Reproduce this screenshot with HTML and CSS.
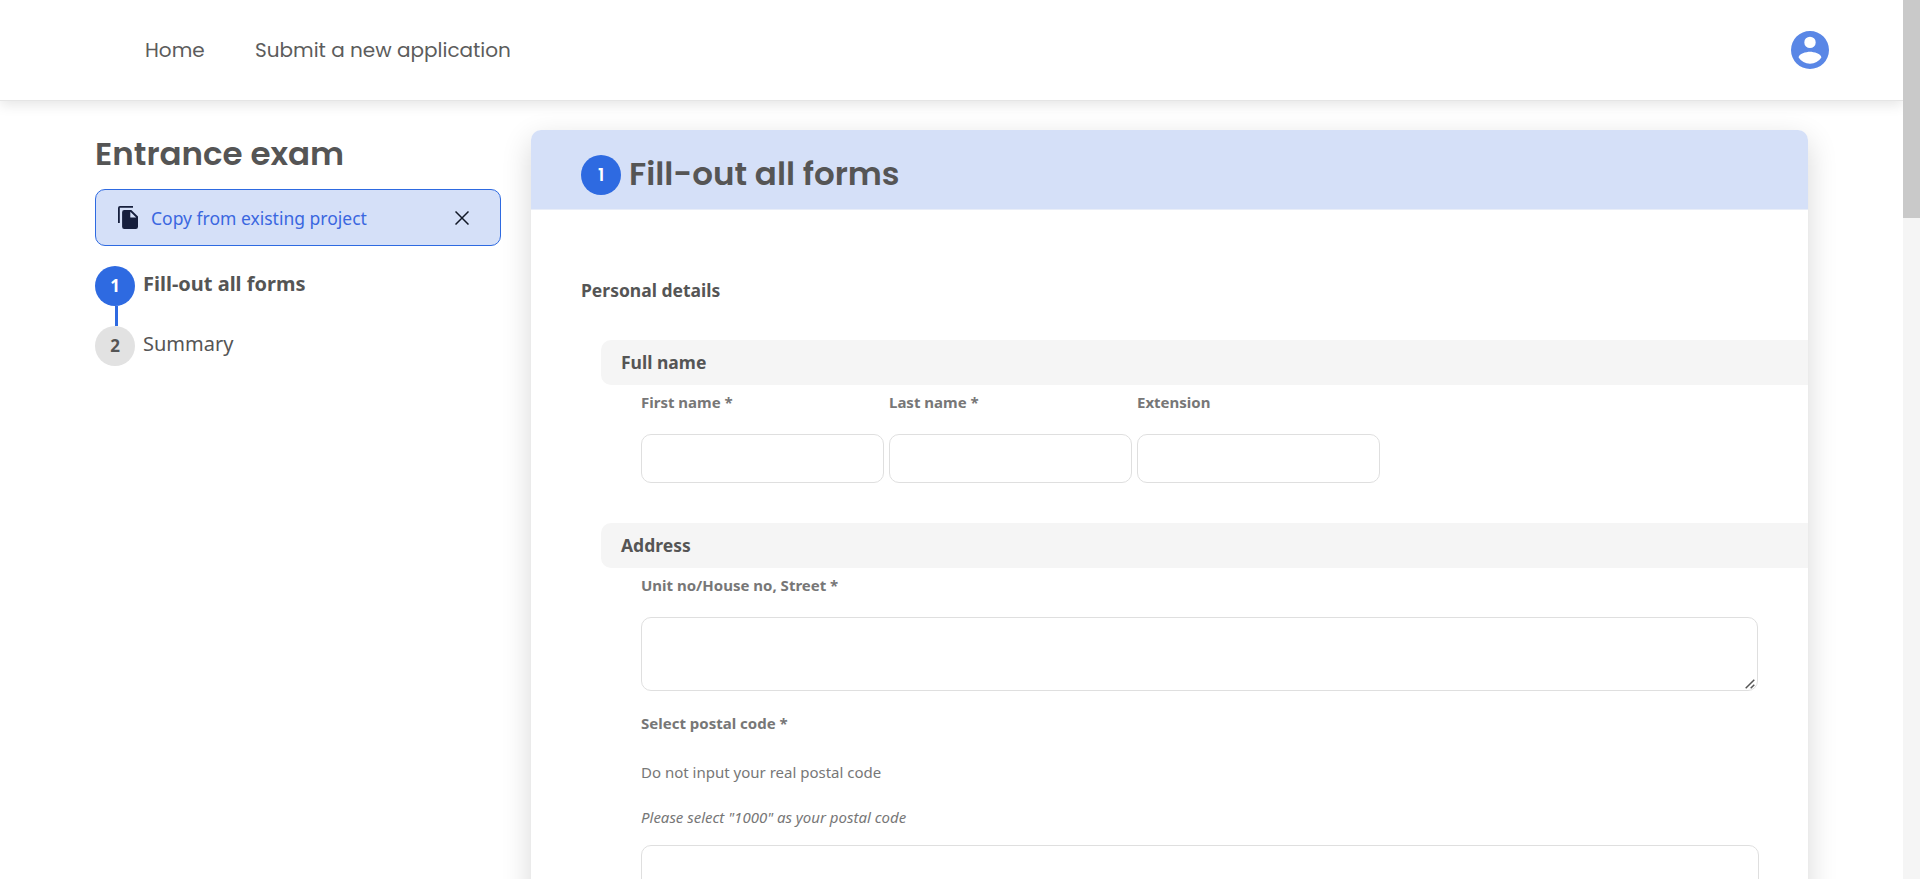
FILE: index.html
```html
<!DOCTYPE html>
<html lang="en">
<head>
<meta charset="utf-8">
<title>Entrance exam</title>
<link rel="stylesheet" href="styles.css">
</head>
<body>
<div class="window">
  <div class="page">
    <header class="topbar">
      <nav class="nav">
        <a class="nav-home">Home</a>
        <a class="nav-submit">Submit a new application</a>
      </nav>
      <svg class="avatar" viewBox="2 2 20 20"><path fill-rule="evenodd" d="M12 2a10 10 0 1 0 0 20 10 10 0 0 0 0-20zm0 3a3 3 0 1 1 0 6 3 3 0 0 1 0-6zm0 14.2a7.200 7.200 0 0 1-6-3.220c.03-1.990 4-3.080 6-3.080s5.970 1.090 6 3.080a7.200 7.200 0 0 1-6 3.220z"/></svg>
    </header>
    <main class="content">
      <aside class="sidebar">
        <h1 class="title side-title">Entrance exam</h1>
        <div class="copy">
          <svg class="copy-icon" viewBox="0 0 20 23"><path d="M0 17V2a2 2 0 0 1 2-2h13v1.700H1.800V17z"/><path fill-rule="evenodd" d="M6.300 4H13.300L20 10.500V20.800a2.200 2.200 0 0 1-2.200 2.200H6.300a2.200 2.200 0 0 1-2.200-2.200V6.200A2.200 2.200 0 0 1 6.300 4zM12.300 5.700V11.500H18.200z"/></svg>
          <span class="copy-text">Copy from existing project</span>
          <svg class="close" viewBox="0 0 14 14"><path d="M.5.5l13 13M13.500.5l-13 13"/></svg>
        </div>
        <ol class="steps">
          <li class="step current"><span class="dot dot-on">1</span><span class="step-name">Fill-out all forms</span></li>
          <li class="link"></li>
          <li class="step"><span class="dot">2</span><span class="step-name">Summary</span></li>
        </ol>
      </aside>
      <section class="card">
        <div class="card-head">
          <span class="dot dot-on dot-head">1</span>
          <h2 class="title card-title">Fill-out all forms</h2>
        </div>
        <h3 class="group">Personal details</h3>
        <h4 class="section">Full name</h4>
        <div class="fields name-row">
          <div class="field"><label class="label">First name *</label><input class="input" type="text"></div>
          <div class="field"><label class="label">Last name *</label><input class="input" type="text"></div>
          <div class="field"><label class="label">Extension</label><input class="input" type="text"></div>
        </div>
        <h4 class="section">Address</h4>
        <div class="fields">
          <label class="label">Unit no/House no, Street *</label>
          <div class="area-wrap">
            <textarea class="area"></textarea>
            <svg class="grip" viewBox="0 0 10 10"><path d="M.7 9.300L9.300.7M5.700 9.300L9.300 5.700"/></svg>
          </div>
          <label class="label postal">Select postal code *</label>
          <p class="hint">Do not input your real postal code</p>
          <p class="hint note">Please select "1000" as your postal code</p>
          <div class="select"></div>
        </div>
      </section>
    </main>
  </div>
  <div class="scroll"><div class="thumb"></div></div>
</div>
</body>
</html>
```
FILE: styles.css
```css
* { box-sizing: border-box; }
body { margin: 0; color: #555; background: #fff; font-family: "Noto Sans", sans-serif; }
h1, h2, h3, h4, p, ol { margin: 0; padding: 0; list-style: none; }
.window { display: grid; grid-template-columns: 1fr 17px; height: 879px; overflow: hidden; }
.page { overflow: hidden; height: 879px; }
.scroll { background: #f5f5f5; }
.thumb { height: 218px; background: #c9c9c9; }

.topbar { position: relative; z-index: 1; display: flex; justify-content: space-between; align-items: center; height: 101px; padding: 0 74px 0 145px; background: #fff; border-bottom: 1px solid #e5e5e5; box-shadow: 0 4px 12px rgba(0, 0, 0, .1); }
.nav { display: flex; gap: 50px; font: 400 20px/30px Poppins, Inter, sans-serif; color: #5c5c5c; }
.nav-home { width: 60px; white-space: nowrap; }
.avatar { width: 38px; height: 38px; fill: #5a87e6; }

.content { display: flex; gap: 30px; padding: 29px 95px 0; }
.sidebar { width: 406px; }
.title { font-family: Poppins, Inter, sans-serif; font-weight: 600; font-size: 32.500px; line-height: 48px; white-space: nowrap; }
.copy { display: flex; align-items: center; height: 57px; margin-top: 11px; padding: 0 31px 0 22px; border: 1px solid #2e6ae1; border-radius: 10px; background: #d5e0f8; }
.copy-icon { width: 20px; height: 23px; fill: #161f3d; }
.copy-text { flex: 1; margin-left: 13px; font-size: 17.500px; color: #3a67e0; }
.close { width: 14px; height: 14px; fill: none; stroke: #111827; stroke-width: 1.500; }
.steps { margin-top: 20px; }
.step { display: flex; gap: 8px; height: 40px; font-size: 20px; line-height: 36px; }
.current { font-weight: 700; }
.dot { flex: none; width: 40px; height: 40px; border-radius: 50%; background: #e2e2e2; font-size: 17px; font-weight: 700; line-height: 40px; text-align: center; }
.dot-on { background: #2e6ae1; color: #fff; }
.link { width: 3px; height: 20px; margin-left: 20px; background: #2e6ae1; }

.card { width: 1277px; height: 900px; border-radius: 10px; background: #fff; box-shadow: 0 10px 30px rgba(0, 0, 0, .16); }
.card-head { display: flex; gap: 8px; height: 80px; padding: 25px 0 0 50px; border-bottom: 1px solid #e8edf8; border-radius: 10px 10px 0 0; background: #d5e0f8; }
.card-title { margin-top: -5px; }
.dot-head { font-family: Poppins, Inter, sans-serif; font-weight: 600; }
.group { margin: 67px 0 0 50px; font-size: 17.500px; font-weight: 700; line-height: 26px; }
.section { height: 45px; margin-left: 70px; padding-left: 20px; border-radius: 10px 0 0 10px; background: #f5f5f5; font-size: 17.500px; font-weight: 700; line-height: 45px; }
.group + .section { margin-top: 37px; }
.fields { padding-left: 110px; padding-right: 49px; }
.name-row { display: flex; gap: 5px; height: 138px; }
.field { width: 243px; }
.label { display: block; height: 49px; padding-top: 5px; font-size: 15px; font-weight: 700; line-height: 24px; color: #777; }
.input { display: block; width: 243px; height: 49px; border: 1px solid #dfdfdf; border-radius: 10px; }
.area-wrap { position: relative; width: 1117px; height: 74px; }
.area { display: block; width: 100%; height: 100%; border: 1px solid #dfdfdf; border-radius: 10px; resize: none; }
.grip { position: absolute; right: 3px; bottom: 2px; width: 10px; height: 10px; fill: none; stroke: #555; stroke-width: 1.500; }
.postal { height: 62px; padding-top: 20px; }
.hint { height: 45px; padding-top: 7px; font-size: 15px; line-height: 24px; color: #777; }
.note { height: 47px; font-style: italic; }
.select { height: 60px; border: 1px solid #dfdfdf; border-radius: 10px; }
```
